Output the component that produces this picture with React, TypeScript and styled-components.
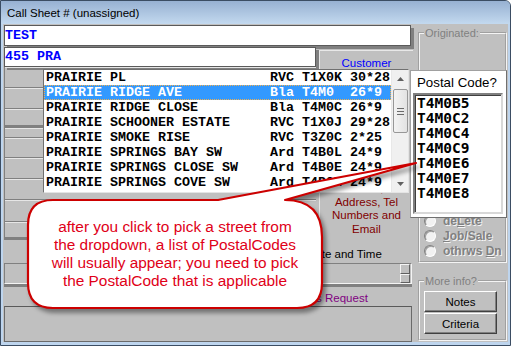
import React from "react";
import styled, { createGlobalStyle } from "styled-components";

const GlobalStyle = createGlobalStyle`
  html, body {
    margin: 0;
    padding: 0;
    background: #ffffff;
  }
  * {
    box-sizing: border-box;
  }
`;

const Window = styled.div`
  position: relative;
  width: 511px;
  height: 346px;
  display: flex;
  flex-direction: column;
  background: #bed5ee;
  border: 1px solid #3b4d63;
  border-top-right-radius: 6px;
  overflow: hidden;
  font-family: "Liberation Sans", Arial, sans-serif;
`;

const TitleBar = styled.div`
  height: 23px;
  flex-shrink: 0;
  padding-left: 6px;
  display: flex;
  align-items: center;
  background: linear-gradient(#97b1d2, #c3d9ef);
  font-size: 11.5px;
  color: #000;
`;

const Client = styled.div`
  flex: 1;
  display: flex;
  margin: 0 2px 3px 2px;
  background: #c0c0c0;
`;

const LeftMain = styled.div`
  width: 412px;
  padding-left: 1px;
  display: flex;
  flex-direction: column;
`;

const TextField = styled.div<{ $w: number; $h: number }>`
  width: ${(p) => p.$w}px;
  height: ${(p) => p.$h}px;
  flex-shrink: 0;
  background: #fff;
  border: 1px solid #5a5a5a;
  box-shadow: 3px 3px 0 #808080;
  font-family: "Liberation Mono", monospace;
  font-weight: bold;
  font-size: 13.33px;
  line-height: ${(p) => p.$h - 2}px;
  color: #0000ff;
`;

const MidRow = styled.div`
  display: flex;
  height: 193px;
  margin-top: 1px;
`;

const SubCol = styled.div`
  width: 312px;
  display: flex;
  flex-direction: column;
`;

const Stubs = styled.div`
  display: flex;
  flex-direction: column;
  border-left: 1px solid #808080;
`;

const Stub = styled.div<{ $h: number; $thick?: boolean }>`
  height: ${(p) => p.$h}px;
  border-top: 1px solid #e6e6e6;
  border-bottom: ${(p) => (p.$thick ? 3 : 1)}px solid #808080;
`;

const CustomerPanel = styled.div`
  width: 94px;
  margin: 3px 0 0 3px;
  display: flex;
  flex-direction: column;
  align-items: center;
  border-top: 1px solid #e8e8e8;
  border-left: 1px solid #e8e8e8;
  font-size: 11.5px;
  text-align: center;
`;

const PanelTitle = styled.div`
  color: #0000ff;
  margin-top: 6px;
  line-height: 13px;
`;

const PanelNote = styled.div`
  margin-top: auto;
  padding-bottom: 4px;
  color: #800000;
  line-height: 13.5px;
`;

const Caption = styled.div<{ $h: number; $pl: number; $color: string }>`
  height: ${(p) => p.$h}px;
  padding-left: ${(p) => p.$pl}px;
  padding-top: 8px;
  font-size: 11.5px;
  line-height: 13px;
  color: ${(p) => p.$color};
`;

const DateField = styled.div`
  height: 21px;
  width: 408px;
  display: flex;
  justify-content: flex-end;
  padding: 0 1px;
  border: 1px solid;
  border-color: #808080 #f4f4f4 #f4f4f4 #808080;
  box-shadow: 0 3px 0 #808080;
`;

const Spinner = styled.div`
  width: 10px;
  display: flex;
  flex-direction: column;
`;

const SpinBtn = styled.div`
  flex: 1;
  border: 1px solid;
  border-color: #f4f4f4 #606060 #606060 #f4f4f4;
`;

const RequestBox = styled.div`
  flex: 1;
  width: 408px;
  border: 1px solid #6a6a6a;
  border-top-color: #5a5a5a;
`;

const RightCol = styled.div`
  width: 89px;
  margin-left: 3px;
  display: flex;
  flex-direction: column;
`;

const Group = styled.fieldset<{ $h: number; $mt: number }>`
  margin: ${(p) => p.$mt}px 0 0 0;
  height: ${(p) => p.$h}px;
  min-width: 0;
  padding: 0;
  border: 2px groove #f4f4f4;
`;

const GroupBody = styled.div<{ $h: number; $justify: string }>`
  height: ${(p) => p.$h}px;
  display: flex;
  flex-direction: column;
  justify-content: ${(p) => p.$justify};
  padding-left: 4px;
`;

const Legend = styled.legend`
  margin-left: 4px;
  padding: 0 1px;
  font-size: 11px;
  line-height: 12px;
  color: #808080;
`;

const RadioRow = styled.div`
  height: 15px;
  display: flex;
  align-items: center;
  gap: 7px;
  font-size: 12px;
  font-weight: bold;
  color: #808080;
  text-shadow: 1px 1px 0 #f4f4f4;
`;

const RadioDot = styled.span`
  width: 12px;
  height: 12px;
  border-radius: 50%;
  background: #f2f2f2;
  border: 1px solid;
  border-color: #808080 #ffffff #ffffff #808080;
  box-shadow: inset 1px 1px 0 #a0a0a0;
`;

const ButtonStack = styled.div`
  display: flex;
  flex-direction: column;
  gap: 1px;
  padding: 4px 0 0 4px;
`;

const Btn = styled.button`
  width: 73px;
  height: 21px;
  padding: 0;
  background: #c0c0c0;
  border: 1px solid;
  border-color: #ffffff #404040 #404040 #ffffff;
  box-shadow: inset -1px -1px 0 #808080;
  font-family: "Liberation Sans", Arial, sans-serif;
  font-size: 11.5px;
  color: #000;
`;

/* dropdown of streets that lies over the form */
const StreetList = styled.div`
  position: absolute;
  left: 42px;
  top: 68px;
  width: 366px;
  height: 124px;
  display: flex;
  background: #fff;
  border: 1px solid;
  border-color: #707070 #e4e4e4 #e4e4e4 #707070;
`;

const Rows = styled.div`
  flex: 1;
`;

const StreetRow = styled.div<{ $sel?: boolean }>`
  height: 15px;
  display: grid;
  grid-template-columns: 224px 1fr;
  padding-left: 2px;
  white-space: pre;
  font-family: "Liberation Mono", monospace;
  font-weight: bold;
  font-size: 13.33px;
  line-height: 15px;
  color: ${(p) => (p.$sel ? "#fff" : "#000")};
  background: ${(p) => (p.$sel ? "#3399ff" : "transparent")};
  outline: ${(p) => (p.$sel ? "1px dotted #f0b050" : "none")};
  outline-offset: -1px;
`;

const ScrollBar = styled.div`
  width: 17px;
  display: flex;
  flex-direction: column;
  align-items: center;
  background: #f0f0f0;
  border-left: 1px solid #e8e8e8;
`;

const Arrow = styled.div`
  height: 17px;
  display: flex;
  align-items: center;
  justify-content: center;
`;

const Thumb = styled.div`
  width: 15px;
  height: 44px;
  margin-top: 2px;
  border: 1px solid #979797;
  border-radius: 2px;
  background: linear-gradient(90deg, #f3f3f3, #e2e2e2);
  display: flex;
  flex-direction: column;
  align-items: center;
  justify-content: center;
  gap: 2px;
`;

const Grip = styled.span`
  width: 7px;
  height: 1px;
  background: #6a6a6a;
`;

const Track = styled.div`
  flex: 1;
`;

/* popup with the postal codes */
const PostalPopup = styled.div`
  position: absolute;
  left: 409px;
  top: 69px;
  width: 97px;
  height: 148px;
  display: flex;
  flex-direction: column;
  background: #fff;
  border: 1px solid;
  border-color: #a0a0a0 #707070 #707070 #a0a0a0;
  padding: 0 3px 3px 2px;
`;

const PostalLabel = styled.div`
  height: 22px;
  padding: 4px 0 0 4px;
  font-size: 13.3px;
  line-height: 15px;
  color: #000;
`;

const PostalList = styled.div`
  flex: 1;
  padding: 1px 0 0 2px;
  border: 2px solid;
  border-color: #808080 #d8d8d8 #d8d8d8 #808080;
  box-shadow: inset 1px 1px 0 #404040;
`;

const PostalItem = styled.div`
  height: 15px;
  font-family: "DejaVu Sans Mono", monospace;
  font-weight: bold;
  font-size: 14.5px;
  line-height: 15px;
  color: #000;
`;

/* callout balloon */
const Callout = styled.div`
  position: absolute;
  left: 24px;
  top: 156px;
  width: 400px;
  height: 160px;
`;

const CalloutShape = styled.svg`
  position: absolute;
  inset: 0;
  overflow: visible;
  filter: drop-shadow(3px 4px 2px rgba(0, 0, 0, 0.4));
`;

const CalloutText = styled.div`
  position: absolute;
  left: 3px;
  top: 61px;
  width: 294px;
  text-align: center;
  font-size: 15.4px;
  line-height: 18px;
  color: #e00018;
  white-space: nowrap;
`;

const streets: [string, string][] = [
  ["PRAIRIE PL", "RVC T1X0K 30*28"],
  ["PRAIRIE RIDGE AVE", "Bla T4M0  26*9"],
  ["PRAIRIE RIDGE CLOSE", "Bla T4M0C 26*9"],
  ["PRAIRIE SCHOONER ESTATE", "RVC T1X0J 29*28"],
  ["PRAIRIE SMOKE RISE", "RVC T3Z0C 2*25"],
  ["PRAIRIE SPRINGS BAY SW", "Ard T4B0L 24*9"],
  ["PRAIRIE SPRINGS CLOSE SW", "Ard T4B0E 24*9"],
  ["PRAIRIE SPRINGS COVE SW", "Ard T4B0M 24*9"],
];

const postalCodes = ["T4M0B5", "T4M0C2", "T4M0C4", "T4M0C9", "T4M0E6", "T4M0E7", "T4M0E8"];

const stubs = [
  { h: 21 },
  { h: 21 },
  { h: 19, thick: true },
  { h: 10 },
  { h: 20 },
  { h: 21 },
  { h: 21 },
  { h: 22 },
  { h: 18, thick: true },
];

export default function App() {
  return (
    <>
      <GlobalStyle />
      <Window>
        <TitleBar>Call Sheet # (unassigned)</TitleBar>
        <Client>
          <LeftMain>
            <TextField $w={407} $h={21} style={{ marginTop: 1 }}>
              TEST
            </TextField>
            <MidRow>
              <SubCol>
                <TextField $w={312} $h={20}>
                  455 PRA
                </TextField>
                <Stubs>
                  {stubs.map((s, i) => (
                    <Stub key={i} $h={s.h} $thick={s.thick} />
                  ))}
                </Stubs>
              </SubCol>
              <CustomerPanel>
                <PanelTitle>Customer</PanelTitle>
                <PanelNote>
                  Name,
                  <br />
                  Address, Tel
                  <br />
                  Numbers and
                  <br />
                  Email
                </PanelNote>
              </CustomerPanel>
            </MidRow>
            <Caption $h={23} $pl={303} $color="#000">
              Date and Time
            </Caption>
            <DateField>
              <Spinner>
                <SpinBtn />
                <SpinBtn />
              </Spinner>
            </DateField>
            <Caption $h={22} $pl={260} $color="#800080">
              Customer's Request
            </Caption>
            <RequestBox />
          </LeftMain>
          <RightCol>
            <Group $h={236} $mt={3}>
              <Legend>Originated:</Legend>
              <GroupBody $h={219} $justify="flex-end">
                <RadioRow>
                  <RadioDot />
                  <span>
                    de<u>L</u>ete
                  </span>
                </RadioRow>
                <RadioRow>
                  <RadioDot />
                  <span>
                    <u>J</u>ob/Sale
                  </span>
                </RadioRow>
                <RadioRow>
                  <RadioDot />
                  <span>
                    othrws <u>D</u>n
                  </span>
                </RadioRow>
              </GroupBody>
            </Group>
            <Group $h={66} $mt={12}>
              <Legend>More info?</Legend>
              <ButtonStack>
                <Btn>Notes</Btn>
                <Btn>Criteria</Btn>
              </ButtonStack>
            </Group>
          </RightCol>
        </Client>

        <StreetList>
          <Rows>
            {streets.map(([name, info], i) => (
              <StreetRow key={name} $sel={i === 1}>
                <span>{name}</span>
                <span>{info}</span>
              </StreetRow>
            ))}
          </Rows>
          <ScrollBar>
            <Arrow>
              <svg width="7" height="4" viewBox="0 0 7 4">
                <path d="M0 4 L3.5 0 L7 4 Z" fill="#606060" />
              </svg>
            </Arrow>
            <Thumb>
              <Grip />
              <Grip />
              <Grip />
            </Thumb>
            <Track />
            <Arrow>
              <svg width="7" height="4" viewBox="0 0 7 4">
                <path d="M0 0 L3.5 4 L7 0 Z" fill="#606060" />
              </svg>
            </Arrow>
          </ScrollBar>
        </StreetList>

        <PostalPopup>
          <PostalLabel>Postal Code?</PostalLabel>
          <PostalList>
            {postalCodes.map((c) => (
              <PostalItem key={c}>{c}</PostalItem>
            ))}
          </PostalList>
        </PostalPopup>

        <Callout>
          <CalloutShape width="400" height="160" viewBox="0 0 400 160">
            <path
              d="M28 43 L193 43 L391 6 L260 43 Q297 43 297 80 L297 126 Q297 151 272 151 L28 151 Q3 151 3 126 L3 68 Q3 43 28 43 Z"
              fill="#ffffff"
              stroke="#cc0000"
              strokeWidth="2.2"
              strokeLinejoin="round"
            />
          </CalloutShape>
          <CalloutText>
            after you click to pick a street from
            <br />
            the dropdown, a list of PostalCodes
            <br />
            will usually appear; you need to pick
            <br />
            the PostalCode that is applicable
          </CalloutText>
        </Callout>
      </Window>
    </>
  );
}
